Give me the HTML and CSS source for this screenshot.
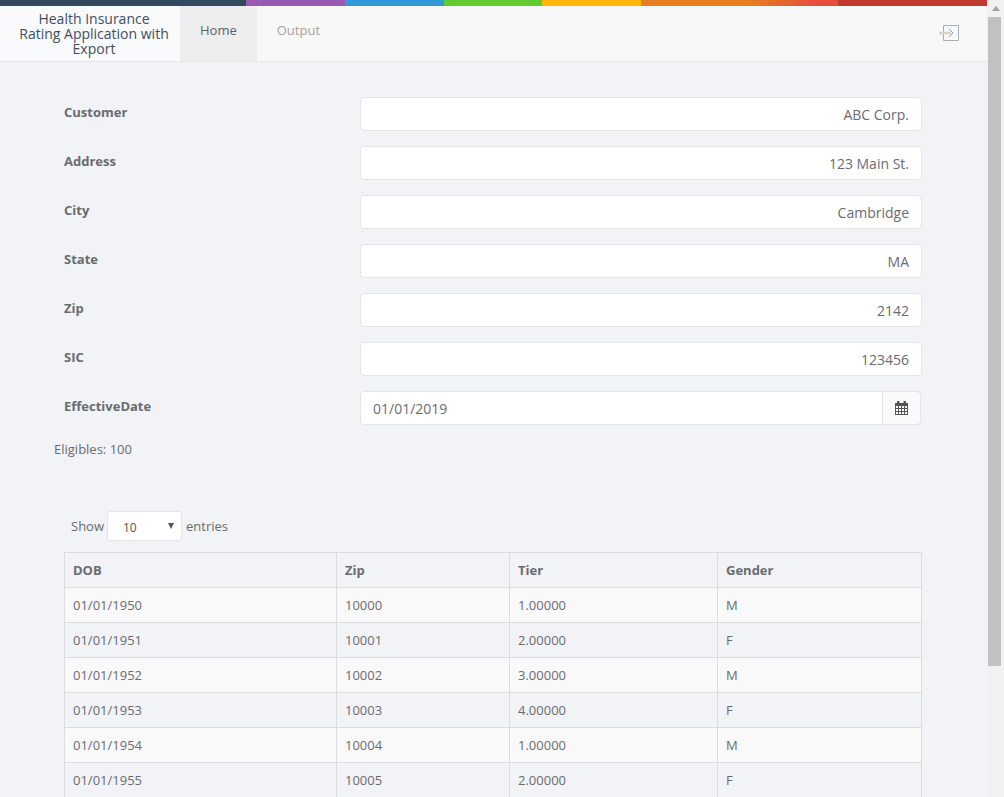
FILE: index.html
```html
<!DOCTYPE html>
<html lang="en">
<head>
    <meta charset="UTF-8">
    <title>Health Insurance Rating Application with Export</title>
    <link rel="stylesheet" href="styles.css">
</head>
<body>
    <div class="page">
        <div class="content">
            <div class="color-bar">
                <span class="c-navy"></span>
                <span class="c-purple"></span>
                <span class="c-blue"></span>
                <span class="c-green"></span>
                <span class="c-yellow"></span>
                <span class="c-orange"></span>
                <span class="c-red"></span>
            </div>

            <div class="navbar">
                <div class="brand">Health Insurance Rating Application with Export</div>
                <a class="tab active">Home</a>
                <a class="tab">Output</a>
                <svg class="logout" width="20" height="16" viewBox="0 0 20 16" fill="none">
                    <path d="M4.500 .5H19.500V15.500H4.500Z" stroke="#a3b1bd" stroke-width="1"/>
                    <path d="M0 8H12" stroke="#d9d5c8" stroke-width="2.500"/>
                    <path d="M10 4L14 8L10 12" stroke="#8ea3b5" stroke-width="1"/>
                </svg>
            </div>

            <div class="form">
                <div class="form-group">
                    <label>Customer</label>
                    <input class="field" type="text" value="ABC Corp.">
                </div>
                <div class="form-group">
                    <label>Address</label>
                    <input class="field" type="text" value="123 Main St.">
                </div>
                <div class="form-group">
                    <label>City</label>
                    <input class="field" type="text" value="Cambridge">
                </div>
                <div class="form-group">
                    <label>State</label>
                    <input class="field" type="text" value="MA">
                </div>
                <div class="form-group">
                    <label>Zip</label>
                    <input class="field" type="text" value="2142">
                </div>
                <div class="form-group">
                    <label>SIC</label>
                    <input class="field" type="text" value="123456">
                </div>
                <div class="form-group">
                    <label>EffectiveDate</label>
                    <div class="date-group">
                        <input class="field date-field" type="text" value="01/01/2019">
                        <span class="date-addon">
                            <svg width="13" height="14" viewBox="0 0 13 14">
                                <path fill="#555" d="M2 2V.5Q2 0 2.500 0H4Q4.500 0 4.500 .5V2H8.500V.5Q8.500 0 9 0H10.500Q11 0 11 .5V2H12.500Q13 2 13 2.500V13.500Q13 14 12.500 14H.5Q0 14 0 13.500V2.500Q0 2 .5 2ZM1 5V7H3V5ZM4 5V7H6V5ZM7 5V7H9V5ZM10 5V7H12V5ZM1 8V10H3V8ZM4 8V10H6V8ZM7 8V10H9V8ZM10 8V10H12V8ZM1 11V13H3V11ZM4 11V13H6V11ZM7 11V13H9V11ZM10 11V13H12V11Z"/>
                            </svg>
                        </span>
                    </div>
                </div>
            </div>

            <div class="eligibles">Eligibles: 100</div>

            <div class="table-wrap">
                <div class="length">
                    Show
                    <span class="length-select">10<i class="caret"></i></span>
                    entries
                </div>
                <table>
                    <tr>
                        <th class="col-dob">DOB</th>
                        <th class="col-zip">Zip</th>
                        <th class="col-tier">Tier</th>
                        <th>Gender</th>
                    </tr>
                    <tr class="odd"><td>01/01/1950</td><td>10000</td><td>1.00000</td><td>M</td></tr>
                    <tr><td>01/01/1951</td><td>10001</td><td>2.00000</td><td>F</td></tr>
                    <tr class="odd"><td>01/01/1952</td><td>10002</td><td>3.00000</td><td>M</td></tr>
                    <tr><td>01/01/1953</td><td>10003</td><td>4.00000</td><td>F</td></tr>
                    <tr class="odd"><td>01/01/1954</td><td>10004</td><td>1.00000</td><td>M</td></tr>
                    <tr><td>01/01/1955</td><td>10005</td><td>2.00000</td><td>F</td></tr>
                </table>
            </div>
        </div>

        <div class="scrollbar">
            <div class="scroll-arrow"></div>
            <div class="scroll-thumb"></div>
        </div>
    </div>
</body>
</html>
```

FILE: styles.css
```css
html, body {
    margin: 0;
    height: 797px;
    overflow: hidden;
}
body {
    font-family: "Open Sans", sans-serif;
    font-size: 13px;
    color: #6a6c6f;
    background-color: #f1f3f6;
}
.page {
    display: flex;
    height: 797px;
}
.content {
    flex: 1;
    min-width: 0;
    overflow: hidden;
}

/* Top colour strip */
.color-bar {
    display: flex;
    height: 6px;
}
.c-navy { width: 246px; background: #34495e; }
.c-purple { width: 99px; background: #9b59b6; }
.c-blue { width: 99px; background: #3498db; }
.c-green { width: 98px; background: #62cb31; }
.c-yellow { width: 99px; background: #ffb606; }
.c-orange { width: 197px; background: linear-gradient(to right, #e67e22 0%, #e67e22 55%, #e74c3c 90%); }
.c-red { flex: 1; background: #c0392b; }

/* Header */
.navbar {
    display: flex;
    height: 55px;
    background-color: #f8f8f8;
    border-bottom: 1px solid #e4e5e7;
}
.brand {
    box-sizing: border-box;
    width: 180px;
    padding: 5px 11px 0 19px;
    background-color: #f9fafb;
    color: #3f4e62;
    font-size: 14px;
    line-height: 15px;
    text-align: center;
}
.tab {
    padding: 15px 20px 0;
    color: #a7a5a2;
    font-size: 13px;
    line-height: 18px;
}
.tab.active {
    background-color: #eeeeee;
    color: #59636c;
}
.logout {
    margin: 19px 28px 0 auto;
}

/* Form */
.form {
    padding: 35px 65px 0 64px;
}
.form-group {
    display: flex;
    height: 34px;
    margin-bottom: 15px;
}
.form-group label {
    width: 296px;
    padding-top: 6px;
    font-weight: 700;
    line-height: 18px;
}
.field {
    box-sizing: border-box;
    flex: 1;
    min-width: 0;
    height: 34px;
    padding: 6px 12px;
    border: 1px solid #e4e5e7;
    border-radius: 4px;
    background: #fff;
    color: #6a6c6f;
    font-family: inherit;
    font-size: 14px;
    text-align: right;
    outline: none;
}
.date-group {
    display: flex;
    flex: 1;
    margin-right: 1px;
}
.date-field {
    text-align: left;
    border-radius: 4px 0 0 4px;
}
.date-addon {
    box-sizing: border-box;
    display: flex;
    align-items: center;
    justify-content: center;
    width: 38px;
    height: 34px;
    background: #f9fafb;
    border: 1px solid #e4e5e7;
    border-left: none;
    border-radius: 0 4px 4px 0;
}

.eligibles {
    padding-left: 54px;
    line-height: 18px;
}

/* Table */
.table-wrap {
    padding: 53px 65px 0 64px;
}
.length {
    display: flex;
    align-items: center;
    gap: 4px;
    height: 30px;
    margin-bottom: 11px;
    padding-left: 7px;
}
.length-select {
    box-sizing: border-box;
    position: relative;
    width: 75px;
    height: 30px;
    margin-left: -1px;
    padding: 7px 0 0 15px;
    border: 1px solid #e4e5e7;
    border-radius: 3px;
    background: #fff;
    font-size: 12px;
    line-height: 18px;
    color: #555;
}
.caret {
    position: absolute;
    top: 11px;
    right: 7px;
    border-left: 3px solid transparent;
    border-right: 3px solid transparent;
    border-top: 6px solid #555;
}
table {
    box-sizing: border-box;
    width: 858px;
    border-collapse: collapse;
    table-layout: fixed;
}
th, td {
    box-sizing: border-box;
    height: 35px;
    padding: 0 8px;
    border: 1px solid #dddddf;
    text-align: left;
    line-height: 18px;
}
th {
    font-weight: 700;
}
.col-dob { width: 272px; }
.col-zip { width: 173px; }
.col-tier { width: 208px; }
tr.odd {
    background-color: #f9f9f9;
}

/* Fake browser scrollbar, the screenshot has one */
.scrollbar {
    flex: none;
    box-sizing: border-box;
    width: 17px;
    height: 797px;
    background: #f1f1f1;
}
.scroll-arrow {
    width: 0;
    margin: 6px auto;
    border-left: 4px solid transparent;
    border-right: 4px solid transparent;
    border-bottom: 5px solid #a3a3a3;
}
.scroll-thumb {
    width: 13px;
    height: 649px;
    margin: 0 auto 0 1px;
    background: #c1c1c1;
}
```
